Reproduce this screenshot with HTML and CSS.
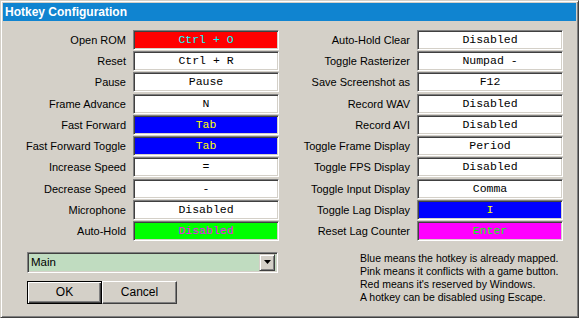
FILE: index.html
```html
<!DOCTYPE html>
<html lang="en">
<head>
    <meta charset="UTF-8">
    <meta name="viewport" content="width=device-width, initial-scale=1.0">
    <title>Hotkey Configuration</title>
    <link rel="stylesheet" href="styles.css">
</head>
<body>

<div class="window">
    <div class="titlebar">Hotkey Configuration</div>

    <div class="content">
        <div class="columns">
            <div class="column left">
                <label>Open ROM</label><div class="key red">Ctrl + O</div>
                <label>Reset</label><div class="key">Ctrl + R</div>
                <label>Pause</label><div class="key">Pause</div>
                <label>Frame Advance</label><div class="key">N</div>
                <label>Fast Forward</label><div class="key blue">Tab</div>
                <label>Fast Forward Toggle</label><div class="key blue">Tab</div>
                <label>Increase Speed</label><div class="key">=</div>
                <label>Decrease Speed</label><div class="key">-</div>
                <label>Microphone</label><div class="key">Disabled</div>
                <label>Auto-Hold</label><div class="key green">Disabled</div>
            </div>
            <div class="column right">
                <label>Auto-Hold Clear</label><div class="key">Disabled</div>
                <label>Toggle Rasterizer</label><div class="key">Numpad -</div>
                <label>Save Screenshot as</label><div class="key">F12</div>
                <label>Record WAV</label><div class="key">Disabled</div>
                <label>Record AVI</label><div class="key">Disabled</div>
                <label>Toggle Frame Display</label><div class="key">Period</div>
                <label>Toggle FPS Display</label><div class="key">Disabled</div>
                <label>Toggle Input Display</label><div class="key">Comma</div>
                <label>Toggle Lag Display</label><div class="key blue">I</div>
                <label>Reset Lag Counter</label><div class="key pink">Enter</div>
            </div>
        </div>

        <div class="bottom">
            <div class="controls">
                <div class="combo">
                    <span class="combo-text">Main</span>
                    <span class="combo-button">
                        <svg width="7" height="4" viewBox="0 0 7 4"><path d="M0 0h7L3.5 4z" fill="#000"/></svg>
                    </span>
                </div>
                <div class="buttons">
                    <button class="btn default">OK</button>
                    <button class="btn">Cancel</button>
                </div>
            </div>
            <div class="help">
                <p>Blue means the hotkey is already mapped.</p>
                <p>Pink means it conflicts with a game button.</p>
                <p>Red means it's reserved by Windows.</p>
                <p>A hotkey can be disabled using Escape.</p>
            </div>
        </div>
    </div>
</div>

</body>
</html>
```

FILE: styles.css
```css
body {
    margin: 0;
    font-family: "Liberation Sans", Arial, sans-serif;
    font-size: 11px;
    color: #000;
    background: #d4d0c8;
}
.window {
    width: 579px;
    height: 318px;
    box-sizing: border-box;
    background: #d4d0c8;
    border: 1px solid;
    border-color: #d4d0c8 #404040 #404040 #d4d0c8;
    box-shadow: inset 1px 1px #fff, inset -1px -1px #808080;
    padding: 2px;
}
.titlebar {
    height: 18px;
    line-height: 18px;
    background: #1084d0;
    color: #fff;
    font-weight: bold;
    font-size: 12px;
    padding-left: 2px;
}
.content {
    padding: 9px 0 0 0;
}
.columns {
    display: flex;
}
.column {
    display: grid;
    grid-template-columns: 1fr 146px;
    grid-auto-rows: 20px;
    row-gap: 1.22px;
    column-gap: 7px;
}
.left {
    width: 275px;
    margin-left: 1px;
}
.right {
    width: 273px;
    margin-left: 11px;
}
label {
    text-align: right;
    line-height: 20px;
    white-space: nowrap;
}
.key {
    box-sizing: border-box;
    background: #fff;
    border: 1px solid;
    border-color: #808080 #fff #fff #808080;
    box-shadow: inset 1px 1px #404040, inset -1px -1px #d4d0c8;
    font-family: "Liberation Mono", "Courier New", monospace;
    font-size: 11.5px;
    line-height: 18px;
    text-align: center;
    white-space: pre;
}
.red { background: #ff0000; color: #00ffff; }
.blue { background: #0000ff; color: #ffff00; }
.green { background: #00ff00; color: #ff00ff; }
.pink { background: #ff00ff; color: #00ff00; }
.bottom {
    display: flex;
    margin-top: 11px;
}
.controls {
    margin-left: 24px;
    width: 251px;
    flex-shrink: 0;
}
.combo {
    box-sizing: border-box;
    height: 21px;
    display: flex;
    align-items: center;
    background: #c0dcc0;
    border: 1px solid;
    border-color: #808080 #fff #fff #808080;
    box-shadow: inset 1px 1px #404040, inset -1px -1px #d4d0c8;
    padding: 2px;
    font-size: 11.5px;
}
.combo-text {
    flex: 1;
    padding-left: 1px;
}
.combo-button {
    box-sizing: border-box;
    width: 16px;
    height: 17px;
    display: flex;
    align-items: center;
    justify-content: center;
    background: #d4d0c8;
    border: 1px solid;
    border-color: #d4d0c8 #404040 #404040 #d4d0c8;
    box-shadow: inset 1px 1px #fff, inset -1px -1px #808080;
}
.buttons {
    display: flex;
    margin-top: 8px;
}
.btn {
    box-sizing: border-box;
    width: 75px;
    height: 23px;
    font-family: "Liberation Sans", Arial, sans-serif;
    font-size: 12px;
    background: #d4d0c8;
    border: 1px solid;
    border-color: #fff #404040 #404040 #fff;
    box-shadow: inset -1px -1px #808080;
    padding: 0;
}
.btn.default {
    border: 1px solid #000;
    box-shadow: inset 1px 1px #fff, inset -1px -1px #404040, inset -2px -2px #808080;
}
.help {
    margin-left: 82px;
    margin-top: 0;
    white-space: nowrap;
}
.help p {
    margin: 0;
    line-height: 13px;
    font-size: 10.5px;
}
```
